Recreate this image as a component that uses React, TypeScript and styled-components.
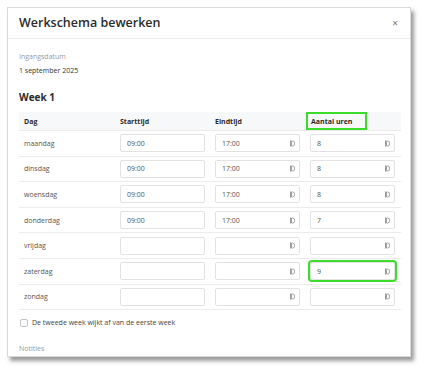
import React from 'react';
import styled, { createGlobalStyle } from 'styled-components';

const GlobalStyle = createGlobalStyle`
  body {
    margin: 0;
    background: #fff;
    font-family: "Open Sans", "Liberation Sans", sans-serif;
    color: #444;
  }
`;

const Page = styled.div`
  padding: 7px 0 0 7px;
  width: 425px;
  height: 371px;
  box-sizing: border-box;
`;

const Modal = styled.div`
  width: 404px;
  height: 350px;
  box-sizing: border-box;
  background: #fff;
  border: 1px solid #d9d9d9;
  box-shadow: 3px 4px 4px rgba(0, 0, 0, 0.4);
  overflow: hidden;
  display: flex;
  flex-direction: column;
`;

const Header = styled.div`
  height: 31px;
  flex-shrink: 0;
  display: flex;
  align-items: center;
  justify-content: space-between;
  padding: 0 12px 1px 11px;
  border-bottom: 1px solid #ececec;
  box-sizing: border-box;
`;

const Title = styled.h1`
  margin: 0;
  font-size: 12.5px;
  font-weight: 600;
  color: #2b2b2b;
`;

const Close = styled.span`
  font-size: 10px;
  color: #777;
  line-height: 1;
`;

const Body = styled.div`
  padding: 12px 11px 0 11px;
  display: flex;
  flex-direction: column;
`;

const Label = styled.div`
  font-size: 7px;
  color: #9a9a9a;
  line-height: 12px;
`;

const DateText = styled.div`
  font-size: 7px;
  color: #333;
  line-height: 12px;
  margin-top: 2px;
`;

const WeekTitle = styled.h2`
  margin: 13px 0 0;
  font-size: 10px;
  font-weight: 700;
  color: #2b2b2b;
  line-height: 14px;
`;

const Table = styled.div`
  margin-top: 8px;
  width: 382px;
  display: grid;
  grid-template-columns: 96px 95px 95px 96px;
`;

const HeadCell = styled.div`
  height: 19px;
  background: #f7f8fa;
  border-bottom: 1px solid #ececec;
  box-sizing: border-box;
  display: flex;
  align-items: center;
  padding-left: 5px;
  font-size: 7px;
  font-weight: 700;
  color: #2b2b2b;
`;

const HeadMark = styled.span`
  display: inline-flex;
  align-items: center;
  box-sizing: border-box;
  width: 61px;
  height: 18px;
  margin-left: -4px;
  padding-left: 3px;
  border: 2px solid #3cdc2c;
`;

const Cell = styled.div`
  height: 25.6px;
  border-bottom: 1px solid #ececec;
  box-sizing: border-box;
  display: flex;
  align-items: center;
  padding-left: 5px;
  font-size: 7px;
  color: #555;
`;

const Field = styled.div<{ $marked?: boolean }>`
  width: 85px;
  height: 18px;
  box-sizing: border-box;
  border: 1px solid #e2e2e2;
  border-radius: 2px;
  display: flex;
  align-items: center;
  justify-content: space-between;
  padding: 0 4px 0 6px;
  font-size: 7px;
  color: #555;
  outline: ${(p) => (p.$marked ? '2px solid #3cdc2c' : 'none')};
  outline-offset: 0;
`;

const FieldText = styled.span`
  color: #555;
`;

const FieldIcon = () => (
  <svg width="5" height="7" viewBox="0 0 5 7">
    <path d="M0.5 0.5v6" stroke="#9a9a9a" strokeWidth="1" fill="none" />
    <path d="M1.5 1h1.2a2 2.5 0 0 1 0 5H1.5z" stroke="#9a9a9a" strokeWidth="0.9" fill="none" />
  </svg>
);

const CheckRow = styled.label`
  margin-top: 7px;
  display: flex;
  align-items: center;
  gap: 4px;
  font-size: 7px;
  color: #444;
  line-height: 12px;
`;

const Box = styled.span`
  width: 6px;
  height: 6px;
  border: 1px solid #c4c4c4;
  border-radius: 2px;
  margin-left: 1px;
`;

const NotesLabel = styled(Label)`
  margin-top: 14px;
`;

const NotesArea = styled.div`
  margin-top: 2px;
  height: 30px;
  width: 382px;
  border: 1px solid #e2e2e2;
  border-radius: 2px;
  box-sizing: border-box;
`;

type Row = { day: string; start: string; end: string; hours: string; marked?: boolean };

const rows: Row[] = [
  { day: 'maandag', start: '09:00', end: '17:00', hours: '8' },
  { day: 'dinsdag', start: '09:00', end: '17:00', hours: '8' },
  { day: 'woensdag', start: '09:00', end: '17:00', hours: '8' },
  { day: 'donderdag', start: '09:00', end: '17:00', hours: '7' },
  { day: 'vrijdag', start: '', end: '', hours: '' },
  { day: 'zaterdag', start: '', end: '', hours: '9', marked: true },
  { day: 'zondag', start: '', end: '', hours: '' },
];

export default function App() {
  return (
    <>
      <GlobalStyle />
      <Page>
        <Modal>
          <Header>
            <Title>Werkschema bewerken</Title>
            <Close>×</Close>
          </Header>
          <Body>
            <Label>Ingangsdatum</Label>
            <DateText>1 september 2025</DateText>
            <WeekTitle>Week 1</WeekTitle>
            <Table>
              <HeadCell>Dag</HeadCell>
              <HeadCell>Starttijd</HeadCell>
              <HeadCell>Eindtijd</HeadCell>
              <HeadCell>
                <HeadMark>Aantal uren</HeadMark>
              </HeadCell>
              {rows.map((r) => (
                <React.Fragment key={r.day}>
                  <Cell>{r.day}</Cell>
                  <Cell>
                    <Field>
                      <FieldText>{r.start}</FieldText>
                    </Field>
                  </Cell>
                  <Cell>
                    <Field>
                      <FieldText>{r.end}</FieldText>
                      <FieldIcon />
                    </Field>
                  </Cell>
                  <Cell>
                    <Field $marked={r.marked}>
                      <FieldText>{r.hours}</FieldText>
                      <FieldIcon />
                    </Field>
                  </Cell>
                </React.Fragment>
              ))}
            </Table>
            <CheckRow>
              <Box />
              De tweede week wijkt af van de eerste week
            </CheckRow>
            <NotesLabel>Notities</NotesLabel>
            <NotesArea />
          </Body>
        </Modal>
      </Page>
    </>
  );
}
